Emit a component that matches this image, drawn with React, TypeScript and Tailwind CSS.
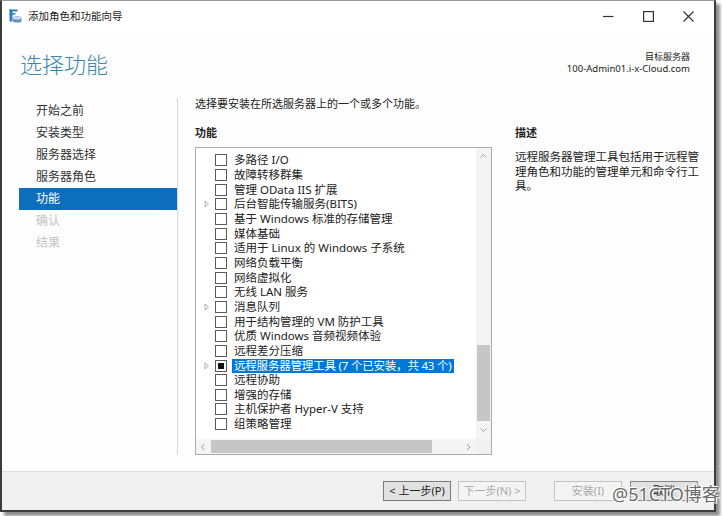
import React from "react";

const items: { label: string; arrow?: boolean; selected?: boolean }[] = [
  { label: "多路径 I/O" },
  { label: "故障转移群集" },
  { label: "管理 OData IIS 扩展" },
  { label: "后台智能传输服务(BITS)", arrow: true },
  { label: "基于 Windows 标准的存储管理" },
  { label: "媒体基础" },
  { label: "适用于 Linux 的 Windows 子系统" },
  { label: "网络负载平衡" },
  { label: "网络虚拟化" },
  { label: "无线 LAN 服务" },
  { label: "消息队列", arrow: true },
  { label: "用于结构管理的 VM 防护工具" },
  { label: "优质 Windows 音频视频体验" },
  { label: "远程差分压缩" },
  { label: "远程服务器管理工具 (7 个已安装，共 43 个)", arrow: true, selected: true },
  { label: "远程协助" },
  { label: "增强的存储" },
  { label: "主机保护者 Hyper-V 支持" },
  { label: "组策略管理" },
];

const nav = [
  { label: "开始之前" },
  { label: "安装类型" },
  { label: "服务器选择" },
  { label: "服务器角色" },
  { label: "功能", active: true },
  { label: "确认", disabled: true },
  { label: "结果", disabled: true },
];

function Chevron({ dir }: { dir: "up" | "down" | "left" | "right" }) {
  const d =
    dir === "up"
      ? "M1.5 5.5 L4.5 2.5 L7.5 5.5"
      : dir === "down"
      ? "M1.5 2.5 L4.5 5.5 L7.5 2.5"
      : dir === "left"
      ? "M5.5 1 L2.5 4 L5.5 7"
      : "M3 1 L6 4 L3 7";
  return (
    <svg width="9" height="8" viewBox="0 0 9 8">
      <path d={d} fill="none" stroke="#a0a0a0" strokeWidth="1" />
    </svg>
  );
}

export default function App() {
  return (
    <div
      className="relative w-[722px] h-[516px] bg-white overflow-hidden text-[#1e1e1e]"
      style={{ fontFamily: '"Noto Sans", "Noto Sans CJK SC", sans-serif' }}
    >
      <div className="w-[716px] h-[512px] flex flex-col bg-[#fdfdfd] border-l-2 border-r-2 border-b-2 border-[#3c3c3c] border-t border-t-[#9a9a9a] shadow-[4px_4px_3px_rgba(0,0,0,0.45)]">
        {/* Title bar */}
        <div className="h-[30px] flex items-center bg-white">
          <div className="ml-[7px] w-[13px] h-[14px] flex items-center justify-center">
            <svg width="13" height="14" viewBox="0 0 13 14">
              <rect x="0.5" y="0.5" width="3" height="12" fill="#2d7fc1" />
              <rect x="0.5" y="0.5" width="8" height="2" fill="#2d7fc1" />
              <rect x="0.5" y="4" width="6" height="1.6" fill="#2d7fc1" />
              <path d="M4 9 Q4 7.2 8.2 7.2 Q12.5 7.2 12.5 9 L12.5 12 Q12.5 13.6 8.2 13.6 Q4 13.6 4 12 Z" fill="#6c8fae" />
              <ellipse cx="8.2" cy="9" rx="4.2" ry="1.5" fill="#c7dcec" />
            </svg>
          </div>
          <div className="ml-[6px] text-[10.5px] leading-none text-[#222]">添加角色和功能向导</div>
          <div className="ml-auto flex items-center h-full">
            <div className="w-[40px] h-full flex items-center justify-center">
              <svg width="11" height="11" viewBox="0 0 11 11">
                <path d="M0 5.5 H10.5" stroke="#333" strokeWidth="1.2" />
              </svg>
            </div>
            <div className="w-[40px] h-full flex items-center justify-center">
              <svg width="11" height="11" viewBox="0 0 11 11">
                <rect x="0.6" y="0.6" width="9.8" height="9.8" fill="none" stroke="#333" strokeWidth="1.2" />
              </svg>
            </div>
            <div className="w-[40px] h-full flex items-center justify-center mr-[6px]">
              <svg width="11" height="11" viewBox="0 0 11 11">
                <path d="M0.5 0.5 L10.5 10.5 M10.5 0.5 L0.5 10.5" stroke="#333" strokeWidth="1.2" />
              </svg>
            </div>
          </div>
        </div>

        {/* Header */}
        <div className="h-[60px] flex justify-between">
          <div className="pt-[19px] pl-[18px] text-[22px] leading-[28px] font-light text-[#3b87ad]">
            选择功能
          </div>
          <div className="pt-[20px] pr-[24px] text-right text-[9px] leading-[12px] text-[#222]">
            <div>目标服务器</div>
            <div className="text-[9.5px]">100-Admin01.i-x-Cloud.com</div>
          </div>
        </div>

        {/* Main */}
        <div className="h-[380px] flex">
          <div className="w-[175px] pt-[9px] pl-[17px]">
            {nav.map((n) => (
              <div
                key={n.label}
                className={
                  "h-[22px] leading-[22px] pl-[17px] text-[12px] " +
                  (n.active
                    ? "bg-[#0e6ebe] text-white"
                    : n.disabled
                    ? "text-[#c4c4c4]"
                    : "text-[#333]")
                }
              >
                {n.label}
              </div>
            ))}
          </div>
          <div className="w-px bg-[#d6d6d6] mt-[7px] mb-[16px]" />
          <div className="flex-1 pl-[17px] pt-[5px]">
            <div className="text-[11px] leading-[16px] text-[#222]">选择要安装在所选服务器上的一个或多个功能。</div>
            <div className="flex mt-[13px] gap-[23px]">
              <div>
                <div className="text-[11px] leading-[16px] font-bold text-[#222]">功能</div>
                <div className="mt-[6px] w-[297px] h-[308px] border border-[#ababab] bg-white flex flex-col">
                  <div className="flex-1 flex min-h-0">
                    <div className="flex-1 pt-[5px]">
                      {items.map((it) => (
                        <div key={it.label} className="h-[14.67px] flex items-center">
                          <div className="w-[18px] flex justify-center pl-[4px]">
                            {it.arrow && (
                              <svg width="6" height="8" viewBox="0 0 6 8">
                                <path d="M1 1 L4.5 4 L1 7 Z" fill="none" stroke="#a6a6a6" strokeWidth="0.9" />
                              </svg>
                            )}
                          </div>
                          <div className="ml-[1px] w-[12px] h-[12px] border border-[#5a5a5a] bg-white flex items-center justify-center">
                            {it.selected && <div className="w-[6px] h-[6px] bg-[#111]" />}
                          </div>
                          <div
                            className={
                              "ml-[5px] text-[11.5px] leading-[14px] px-[2px] whitespace-nowrap " +
                              (it.selected ? "bg-[#0078d7] text-white tracking-[-0.2px]" : "text-[#222]")
                            }
                          >
                            {it.label}
                          </div>
                        </div>
                      ))}
                    </div>
                    <div className="w-[15px] flex flex-col bg-[#f4f4f4]">
                      <div className="h-[15px] flex items-center justify-center">
                        <Chevron dir="up" />
                      </div>
                      <div className="h-[182px]" />
                      <div className="h-[76px] bg-[#c6c6c6] mx-[1px]" />
                      <div className="flex-1 flex items-center justify-center">
                        <Chevron dir="down" />
                      </div>
                    </div>
                  </div>
                  <div className="h-[15px] flex bg-[#f4f4f4]">
                    <div className="w-[15px] flex items-center justify-center">
                      <Chevron dir="left" />
                    </div>
                    <div className="w-[221px] bg-[#c6c6c6] my-[1px]" />
                    <div className="flex-1" />
                    <div className="w-[15px] flex items-center justify-center">
                      <Chevron dir="right" />
                    </div>
                    <div className="w-[15px] bg-[#f0f0f0]" />
                  </div>
                </div>
              </div>
              <div>
                <div className="text-[11px] leading-[16px] font-bold text-[#222]">描述</div>
                <div className="mt-[9px] w-[187px] text-[11.5px] leading-[14.5px] text-[#222]">
                  远程服务器管理工具包括用于远程管理角色和功能的管理单元和命令行工具。
                </div>
              </div>
            </div>
          </div>
        </div>

        {/* Footer */}
        <div className="flex-1 border-t border-[#dfdfdf] bg-[#f0f0f0] flex items-center justify-end pr-[16px] text-[11px]">
          <div className="w-[68px] h-[20px] border border-[#7a7a7a] bg-[#e1e1e1] flex items-center justify-center text-[#222]">
            &lt; 上一步(P)
          </div>
          <div className="ml-[7px] w-[68px] h-[20px] border border-[#c4c4c4] bg-[#f4f4f4] flex items-center justify-center text-[#a8a8a8]">
            下一步(N) &gt;
          </div>
          <div className="ml-[28px] w-[68px] h-[20px] border border-[#c4c4c4] bg-[#f4f4f4] flex items-center justify-center text-[#a8a8a8]">
            安装(I)
          </div>
          <div className="ml-[8px] w-[68px] h-[20px] border border-[#8a8a8a] bg-[#e1e1e1] flex items-center justify-center text-[#222]">
            取消
          </div>
        </div>
      </div>

      {/* Watermark */}
      <div className="absolute left-[612px] top-[482px] text-[18px] leading-[24px] text-[#6a6a6a] [text-shadow:0_0_2px_#fff,0_0_2px_#fff,1px_1px_0_#fff,-1px_-1px_0_#fff]">
        @51CTO博客
      </div>
    </div>
  );
}
